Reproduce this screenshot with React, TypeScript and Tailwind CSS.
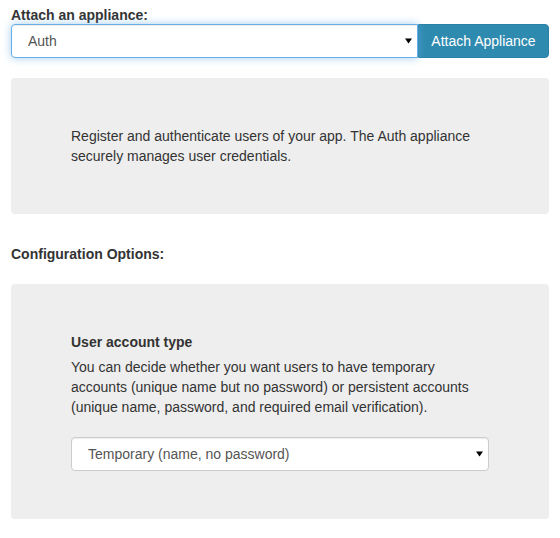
import React from "react";

function Caret() {
  return (
    <svg
      className="pointer-events-none absolute right-[6px] top-1/2 -translate-y-1/2"
      width="7"
      height="6"
      viewBox="0 0 7 6"
    >
      <path d="M0 0.5h7L3.5 5.5z" fill="#000" />
    </svg>
  );
}

export default function App() {
  return (
    <div className="min-h-[538px] bg-white px-[11px] font-['Liberation_Sans',Arial,sans-serif] text-[14px] text-[#333]">
      {/* Attach */}
      <label className="block pt-[6px] text-[14px] font-bold leading-[18px]">Attach an appliance:</label>
      <div className="flex h-[34px]">
        <div className="relative min-w-0 flex-1">
          <select
            defaultValue="auth"
            className="h-[34px] w-full appearance-none rounded-l-[4px] border border-[#66afe9] bg-white pl-[16px] pr-6 text-[14px] leading-5 text-[#555] shadow-[inset_0_1px_1px_rgba(0,0,0,0.075),0_0_8px_rgba(102,175,233,0.6)] outline-none"
          >
            <option value="auth">Auth</option>
          </select>
          <Caret />
        </div>
        <button className="h-[34px] w-[131px] shrink-0 whitespace-nowrap rounded-r-[4px] border border-[#2b82a6] bg-[#2f8ab0] px-[12px] text-[14px] leading-5 text-white">
          Attach Appliance
        </button>
      </div>

      {/* Description */}
      <div className="mt-[20px] rounded-[4px] bg-[#eeeeee] px-[60px] py-[48px]">
        <p className="leading-5">
          Register and authenticate users of your app. The Auth appliance securely manages user credentials.
        </p>
      </div>

      <h4 className="mt-[30px] text-[14px] font-bold leading-5">Configuration Options:</h4>

      {/* Options */}
      <div className="mt-[20px] rounded-[4px] bg-[#eeeeee] px-[60px] py-[48px]">
        <label className="mb-[5px] block font-bold leading-5">User account type</label>
        <p className="leading-5">
          You can decide whether you want users to have temporary accounts (unique name but no password) or persistent
          accounts (unique name, password, and required email verification).
        </p>
        <div className="relative mt-[20px]">
          <select
            defaultValue="temporary"
            className="h-[34px] w-full appearance-none rounded-[4px] border border-[#ccc] bg-white pl-[16px] pr-6 text-[14px] leading-5 text-[#555] shadow-[inset_0_1px_1px_rgba(0,0,0,0.075)] outline-none"
          >
            <option value="temporary">Temporary (name, no password)</option>
            <option value="persistent">Persistent (name, password, email)</option>
          </select>
          <Caret />
        </div>
      </div>
    </div>
  );
}
